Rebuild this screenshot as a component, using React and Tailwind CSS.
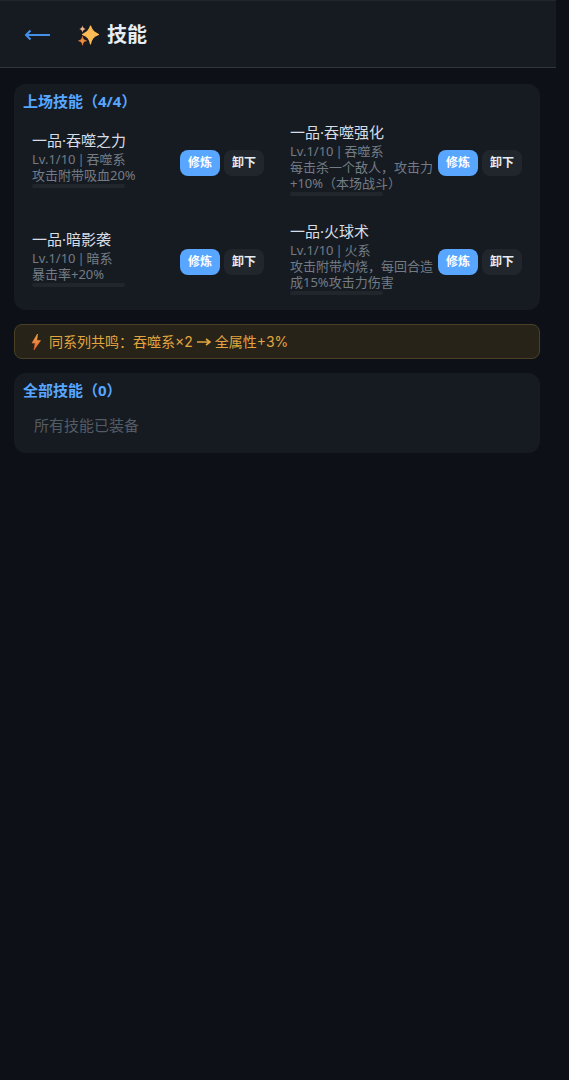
import React from 'react';

const skills = [
  { name: '一品·吞噬之力', level: 'Lv.1/10 | 吞噬系', desc: '攻击附带吸血20%' },
  { name: '一品·吞噬强化', level: 'Lv.1/10 | 吞噬系', desc: '每击杀一个敌人，攻击力+10%（本场战斗）' },
  { name: '一品·暗影袭', level: 'Lv.1/10 | 暗系', desc: '暴击率+20%' },
  { name: '一品·火球术', level: 'Lv.1/10 | 火系', desc: '攻击附带灼烧，每回合造成15%攻击力伤害' },
];

function Sparkles() {
  return (
    <svg width="22" height="22" viewBox="0 0 22 22" className="shrink-0">
      <path d="M13.5 2 C14.5 6.5 16.5 8.5 21.5 10.5 C16.5 12.5 14.5 14.5 13.5 20 C12.5 14.5 10.5 12.5 5.5 10.5 C10.5 8.5 12.5 6.5 13.5 2Z" fill="#ffbb55" stroke="#ffbb55" strokeWidth="1.2" strokeLinejoin="round" />
      <path d="M5.5 1.5 C5.9 3.6 6.6 4.3 8.8 4.9 C6.6 5.5 5.9 6.2 5.5 8.5 C5.1 6.2 4.4 5.5 2.2 4.9 C4.4 4.3 5.1 3.6 5.5 1.5Z" fill="#f0b48c" />
      <path d="M5.5 12.5 C5.9 15.2 6.8 16 9.5 16.8 C6.8 17.5 5.9 18.4 5.5 21.2 C5.1 18.4 4.2 17.5 1.5 16.8 C4.2 16 5.1 15.2 5.5 12.5Z" fill="#f08a3c" stroke="#f08a3c" strokeWidth="0.6" strokeLinejoin="round" />
    </svg>
  );
}

function Bolt() {
  return (
    <svg width="10" height="16" viewBox="0 0 10 16" className="shrink-0">
      <defs>
        <linearGradient id="bolt" x1="0" y1="0" x2="0" y2="1">
          <stop offset="0" stopColor="#f7a94a" />
          <stop offset="1" stopColor="#e8602f" />
        </linearGradient>
      </defs>
      <path d="M6.5 0 L1 9 L4.2 9 L3 16 L9.5 6.5 L5.8 6.5 Z" fill="url(#bolt)" stroke="url(#bolt)" strokeWidth="0.6" strokeLinejoin="round" />
    </svg>
  );
}

function SkillRow({ skill }) {
  return (
    <div className="flex items-center gap-[4px] p-[9px]">
      <div className="flex-1 min-w-0">
        <div className="mb-[2px] text-[15px] leading-[20px] text-[#d6dde4]">{skill.name}</div>
        <div className="text-[13px] leading-[15px] text-[#737b85] [word-spacing:-1.5px]">{skill.level}</div>
        <div className="text-[13px] leading-[16px] text-[#737b85]">{skill.desc}</div>
        <div className="mt-[1px] mb-[8px] h-[4px] w-[93px] rounded-full bg-[#21262d]" />
      </div>
      <button className="w-[40px] h-[26px] shrink-0 rounded-[8px] bg-[#58a6ff] text-[12px] font-bold text-white">修炼</button>
      <button className="w-[40px] h-[26px] shrink-0 rounded-[8px] bg-[#21262d] text-[12px] font-bold text-[#e6edf3]">卸下</button>
    </div>
  );
}

export default function App() {
  return (
    <div className="min-h-[1080px] bg-[#0d1117] font-['Noto_Sans','Noto_Sans_CJK_SC',sans-serif]">
      <div className="w-[556px]">
        <header className="h-[68px] flex items-center bg-[#161b22] border-b border-[#30363d] border-t border-t-[#21262d] pl-[24px] pt-[2px]">
          <span className="w-[28px]">
            <svg width="26" height="12" viewBox="0 0 26 12">
              <path d="M2 6 H26 M6.5 1.5 L2 6 L6.5 10.5" fill="none" stroke="#4490e8" strokeWidth="2" />
            </svg>
          </span>
          <div className="ml-[25px] flex items-center gap-[8px]">
            <Sparkles />
            <h1 className="text-[20px] font-bold text-[#e6edf3]">技能</h1>
          </div>
        </header>

        <main className="pl-[14px] pr-[16px] pt-[16px] flex flex-col gap-[14px]">
          <section className="rounded-[12px] bg-[#161b22] px-[9px] pt-[7px] pb-[3px]">
            <h2 className="mb-[6px] text-[15px] leading-[20px] font-bold text-[#58a6ff]">上场技能（4/4）</h2>
            <div className="grid grid-cols-2 gap-x-[8px] gap-y-[8px]">
              {skills.map((s) => (
                <div key={s.name} className="h-[91px] flex items-center">
                  <div className="w-full"><SkillRow skill={s} /></div>
                </div>
              ))}
            </div>
          </section>

          <div className="h-[35px] flex items-center gap-[8px] rounded-[8px] border border-[#4a4026] bg-[#272319] pl-[16px] text-[14px] text-[#e3a53f] font-['Inter','Noto_Sans_CJK_SC',sans-serif]">
            <Bolt />
            <span className="flex items-center gap-[4px]">
              同系列共鸣：吞噬系×2
              <svg width="14" height="8" viewBox="0 0 14 8">
                <path d="M0 4 H12 M9 1 L13 4 L9 7" fill="none" stroke="#e3a53f" strokeWidth="1.6" />
              </svg>
              全属性+3%
            </span>
          </div>

          <section className="h-[80px] rounded-[12px] bg-[#161b22] px-[9px] pt-[7px]">
            <h2 className="text-[15px] leading-[20px] font-bold text-[#58a6ff]">全部技能（0）</h2>
            <p className="mt-[15px] pl-[11px] text-[15px] leading-[20px] text-[#545b64]">所有技能已装备</p>
          </section>
        </main>
      </div>
    </div>
  );
}
